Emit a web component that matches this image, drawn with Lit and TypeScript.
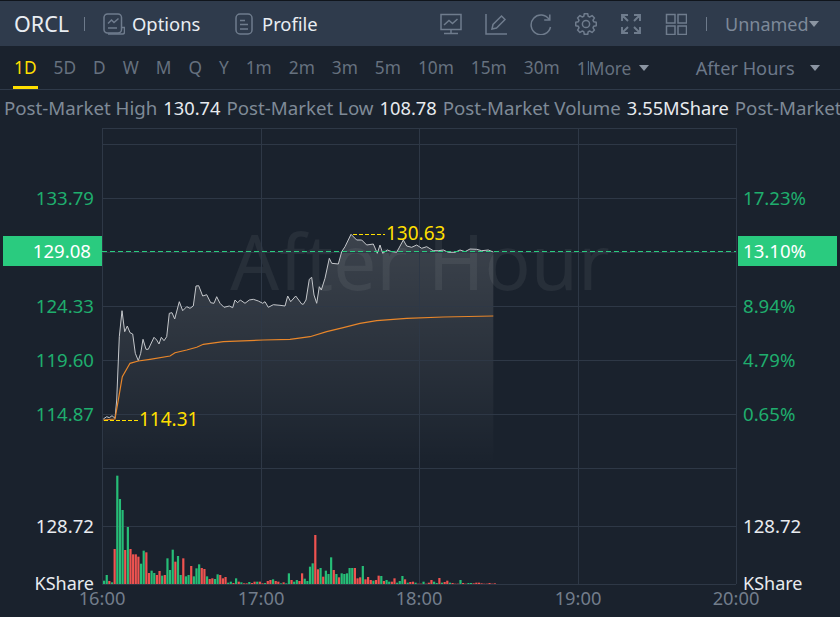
import { LitElement, html, css, svg } from "lit";
import { customElement } from "lit/decorators.js";

const z3 = (a: number[]) => { const o: [number, number][] = []; for (let i = 0; i < a.length; i += 2) o.push([90 + a[i] / 3, 220 + a[i + 1] / 3]); return o; };
const z4 = (a: number[]) => { const o: [number, number][] = []; for (let i = 0; i < a.length; i += 2) o.push([300 + a[i] / 3, 220 + a[i + 1] / 3]); return o; };

const WHITE = [
  ...z3([40,597,50,590,58,593,66,587,75,595,80,540,88,350,96,272,104,335,112,318,120,338,128,342,136,400,145,422,152,400,159,358,168,388,175,388,192,352,200,360,207,372,214,352,222,362,230,350,238,280,246,278,254,297,268,245,278,272,290,260,300,265,310,258,318,198,326,197,338,228,350,224,362,248,372,250,380,230,390,250,402,262,418,258,428,263,435,240,443,248,451,240,465,250,478,240,490,238,505,243,518,250,525,245,535,262,550,254,570,256,585,258,593,228,602,245,617,228,635,252]),
  ...z4([10,253,18,240,28,178,35,172,42,225,50,250,58,200,64,210,75,175,88,115,95,130,115,132,125,95,135,80,153,43,170,60,185,60,200,75,220,72,232,100,240,75,248,100,262,90,275,95,290,97,310,60,320,78,335,82,350,75,365,85,380,80,400,92,415,92,430,90,445,97,465,97,480,90,495,95,510,87,530,88,545,92,565,90,580,96]),
];
const ORANGE = [
  ...z3([40,600,75,597,85,540,97,470,120,430,145,423,180,418,240,408,255,398,290,390,320,382,340,373,400,365,520,360,600,358]),
  ...z4([30,350,80,335,130,323,180,310,230,302,320,295,430,291,580,288]),
];
const pts = (p: [number, number][]) => p.map(([x, y]) => `${x.toFixed(1)},${y.toFixed(1)}`).join(" ");

// 1 = green, 0 = red; heights in 3x zoom pixels
const BARS: [number, number][] = [
  [1,10],[1,27],[0,9],[1,5],[0,105],[1,325],[1,255],[1,222],[0,102],[1,171],[0,105],[0,89],[0,89],[0,82],[1,61],[1,100],[0,95],[0,33],[1,40],[1,33],
  [0,27],[0,39],[1,25],[0,27],[1,77],[1,42],[1,103],[0,67],[1,84],[1,27],[0,77],[1,23],[1,27],[0,54],[1,23],[1,47],[1,59],[0,48],[0,45],[1,23],
  [0,15],[0,17],[1,15],[1,29],[0,27],[0,17],[0,21],[1,4],[1,7],[0,3],[1,17],[0,7],[1,5],[0,2],[0,2],[1,6],[0,3],[0,7],[1,7],[0,7],
  [0,2],[1,3],[0,9],[0,12],[1,14],[0,9],[0,7],[1,2],[0,5],[1,2],
  [1,32],[0,12],[1,7],[1,12],[0,9],[0,32],[1,16],[1,9],[1,52],[1,62],[0,147],[0,44],[1,48],[0,22],[1,40],[1,30],[1,80],[0,42],[1,30],[0,20],
  [1,32],[1,30],[1,32],[1,48],[1,48],[0,48],[0,17],[0,20],[1,54],[0,14],[0,21],[0,12],[1,10],[0,12],[0,25],[1,24],[0,9],[1,12],[1,7],[0,7],
  [0,17],[1,4],[1,9],[1,24],[0,14],[1,4],[0,6],[0,7],[1,4],[0,1],[0,1],[1,7],[0,1],[0,4],[0,12],[1,7],[1,3],[0,18],[1,4],[0,6],
  [0,10],[1,4],[0,3],[0,1],[0,1],[1,12],[0,3],[0,1],[1,3],[1,3],[0,2],[0,4],[0,4],[0,2],[0,1],[0,1],[0,3],[0,1],[0,2],
];

const H_LINES = [144, 198, 252, 306, 360, 414, 468, 526, 584];
const V_LINES = [102, 261, 419, 578, 736];
const LEFT = [["133.79", 197], ["124.33", 305], ["119.60", 359], ["114.87", 413]] as const;
const RIGHT = [["17.23%", 197], ["8.94%", 305], ["4.79%", 359], ["0.65%", 413]] as const;
const TIMES = [["16:00", 102], ["17:00", 261], ["18:00", 419], ["19:00", 578], ["20:00", 736]] as const;

const gearPath = (() => {
  const cx = 11, cy = 11, n = 8, R = 10.4, r = 8;
  let d = "";
  for (let i = 0; i < n; i++) {
    const a = (i / n) * Math.PI * 2 - Math.PI / 2;
    const w = Math.PI / n;
    const p = [[a - w * 0.42, R], [a + w * 0.42, R], [a + w * 0.72, r], [a + w * 1.28, r]];
    p.forEach(([t, q], j) => {
      d += `${i === 0 && j === 0 ? "M" : "L"}${(cx + q * Math.cos(t)).toFixed(2)} ${(cy + q * Math.sin(t)).toFixed(2)}`;
    });
  }
  return d + "Z";
})();

const ICONS = {
  options: svg`<rect x="1" y="1" width="17.5" height="19" rx="3.5"/><path d="M18.5 14.5h3v4.5a2 2 0 0 1-2 2H5"/><path d="M5 10.5l3.5-3.5 2.5 2.5 4.5-4"/><path d="M5 15h9"/>`,
  profile: svg`<rect x="1" y="1" width="16" height="20" rx="4"/><path d="M5 7.5h5M5 11.5h8M5 16h8"/>`,
  monitor: svg`<rect x="1" y="1.5" width="20" height="15"/><path d="M4 12l5-4.5 3.5 3 5-4.5M11 16.5v4M4 20.5h14"/>`,
  edit: svg`<path d="M1 1v20h21"/><path d="M7 16l1-4.5L16.5 3l3.5 3.5-8.5 8.5z"/>`,
  refresh: svg`<path d="M19.2 6.6A9.8 9.8 0 1 0 20.5 14"/><path d="M19.8 1.5v5.6h-5.6"/>`,
  gear: svg`<path d=${gearPath} stroke-linejoin="round"/><circle cx="11" cy="11" r="3.6"/>`,
  expand: svg`<path d="M2 2l6 6M2 8V2h6M20 2l-6 6M14 2h6v6M2 20l6-6M2 14v6h6M20 20l-6-6M20 14v6h-6" stroke-width="1.9"/>`,
  grid: svg`<rect x="1.5" y="1.5" width="8.5" height="8.5"/><rect x="13" y="1.5" width="8.5" height="8.5"/><rect x="1.5" y="13" width="8.5" height="8.5"/><rect x="13" y="13" width="8.5" height="8.5"/>`,
};
const icon = (k: keyof typeof ICONS) => html`<svg class="ico" width="22" height="22" viewBox="0 0 22 22">${ICONS[k]}</svg>`;

const TABS = ["5D", "D", "W", "M", "Q", "Y", "1m", "2m", "3m", "5m", "10m", "15m", "30m"];

@customElement("app-root")
export class AppRoot extends LitElement {
  static styles = css`
    :host { display: block; width: 840px; height: 617px; overflow: hidden; background: #1a222d; font-family: "Noto Sans", "Open Sans", sans-serif; }
    .top { height: 1px; background: #10151c; }
    .header { height: 45px; background: #2f3b4c; display: flex; align-items: center; padding-left: 14px; color: #e9edf2; box-sizing: border-box; }
    .sym { font-size: 21.5px; width: 55px; white-space: nowrap; }
    .sep { width: 1px; height: 14px; background: #6d7a8b; }
    .sep.a { margin: 0 18px 0 15px; }
    .sep.b { margin: 0 18px 0 19px; }
    .item { display: flex; align-items: center; font-size: 18.4px; }
    .item .ico { margin-right: 7px; }
    .item.o { width: 132px; }
    .item.p .ico { margin-right: 5px; }
    .item.p { width: 205px; }
    .ico { fill: none; stroke: #6f7c8d; stroke-width: 1.5; flex: none; }
    .tools { display: flex; gap: 23px; }
    .unnamed { font-size: 18px; color: #7d8999; display: flex; align-items: center; white-space: nowrap; }
    .caret { width: 0; height: 0; border-left: 5px solid transparent; border-right: 5px solid transparent; border-top: 6px solid #8b95a2; flex: none; }
    .tabs { height: 44px; box-sizing: border-box; padding: 1px 0 0 14px; border-bottom: 1px solid #2f3a49; display: flex; align-items: center; font-size: 17.3px; color: #66717f; white-space: nowrap; }
    .tab { margin-right: 17px; flex: none; line-height: 42px; }
    .tab.on { color: #ffdf00; position: relative; }
    .tab.on::after { content: ""; position: absolute; left: -1px; right: -1px; bottom: 0; height: 3px; background: #ffdf00; }
    .clip { width: 12px; overflow: hidden; flex: none; }
    .more { width: 44px; overflow: hidden; flex: none; }
    .tabs .caret { margin-left: 6px; }
    .hours { font-size: 18.2px; margin-left: 47px; color: #6c7889; }
    .tabs .caret.end { margin-left: 15px; }
    .info { height: 38px; display: flex; align-items: center; padding: 0 0 3px 4px; font-size: 18.7px; color: #7f8a97; white-space: nowrap; overflow: hidden; box-sizing: border-box; }
    .info b { font-weight: 400; font-size: 18.3px; color: #e8ebef; margin: 0 6px; }
    svg.chart { display: block; font-family: "Noto Sans", "Open Sans", sans-serif; }
    .grid { stroke: #2e3846; stroke-width: 1; shape-rendering: crispEdges; }
    .num { font-size: 18.6px; fill: #1fae6d; dominant-baseline: central; }
    .num.ks { font-size: 18px; }
    .time { font-size: 18.3px; fill: #727d8b; text-anchor: middle; dominant-baseline: central; }
    .end { text-anchor: end; }
    .wh { fill: #e8ebef; }
    .white { fill: #ffffff; }
    .ylw { fill: #ffdf00; font-size: 19px; dominant-baseline: central; }
    .mark { fill: #2acb7f; }
    .wm { font-size: 76.5px; fill: #ffffff; fill-opacity: 0.06; text-anchor: middle; dominant-baseline: central; }
    .dash { stroke: #2acb7f; stroke-width: 1; stroke-dasharray: 5 3; shape-rendering: crispEdges; }
    .lead { stroke: #ffdf00; stroke-width: 1; stroke-dasharray: 4 2; shape-rendering: crispEdges; }
  `;

  render() {
    const area = `${WHITE[0][0]},465 ${pts(WHITE)} 493.3,${WHITE[WHITE.length - 1][1]} 493.3,465`;
    return html`
      <div class="top"></div>
      <div class="header">
        <span class="sym">ORCL</span><span class="sep a"></span>
        <span class="item o">${icon("options")}Options</span>
        <span class="item p">${icon("profile")}Profile</span>
        <span class="tools">${(["monitor", "edit", "refresh", "gear", "expand", "grid"] as const).map((k) => icon(k))}</span>
        <span class="sep b"></span>
        <span class="unnamed">Unnamed<span class="caret"></span></span>
      </div>
      <div class="tabs">
        <span class="tab on">1D</span>
        ${TABS.map((t) => html`<span class="tab">${t}</span>`)}
        <span class="clip">1h</span>
        <span class="more">More</span><span class="caret"></span>
        <span class="hours">After Hours</span><span class="caret end"></span>
      </div>
      <div class="info">Post-Market High<b>130.74</b>Post-Market Low<b>108.78</b>Post-Market Volume<b>3.55MShare</b>Post-Market</div>
      <svg class="chart" width="840" height="489" viewBox="0 128 840 489">
        <defs>
          <linearGradient id="fade" x1="0" y1="235" x2="0" y2="465" gradientUnits="userSpaceOnUse">
            <stop offset="0" stop-color="#fff" stop-opacity="0.15"/>
            <stop offset="1" stop-color="#fff" stop-opacity="0"/>
          </linearGradient>
        </defs>
        <text class="wm" x="420" y="260">After Hour</text>
        <polygon points=${area} fill="url(#fade)"/>
        ${H_LINES.map((y) => svg`<line class="grid" x1="102" x2="736" y1=${y} y2=${y}/>`)}
        <line class="grid" x1="102" x2="736" y1="128" y2="128"/>
        ${V_LINES.map((x) => svg`<line class="grid" x1=${x} x2=${x} y1="128" y2="584"/>`)}
        ${BARS.map(([g, h], i) => svg`<rect x=${(103 + i * 2.64).toFixed(2)} y=${(584 - h / 3).toFixed(2)} width="2.2" height=${(h / 3).toFixed(2)} fill=${g ? "#26bd77" : "#ef5350"}/>`)}
        <polyline points=${pts(WHITE)} fill="none" stroke="#c4c7cb" stroke-width="1"/>
        <polyline points=${pts(ORANGE)} fill="none" stroke="#e8862a" stroke-width="1.2"/>
        <line class="dash" x1="102" x2="736" y1="251.5" y2="251.5"/>
        <line class="lead" x1="353" x2="385" y1="234.5" y2="234.5"/>
        <text class="ylw" x="386" y="233">130.63</text>
        <line class="lead" x1="104" x2="139" y1="420.5" y2="420.5"/>
        <text class="ylw" x="139" y="419">114.31</text>
        <rect class="mark" x="3" y="236" width="99" height="30"/>
        <rect class="mark" x="738" y="236" width="99" height="30"/>
        ${LEFT.map(([t, y]) => svg`<text class="num end" x="94" y=${y}>${t}</text>`)}
        ${RIGHT.map(([t, y]) => svg`<text class="num" x="743" y=${y}>${t}</text>`)}
        <text class="num end white" x="91" y="250">129.08</text>
        <text class="num white" x="743" y="250">13.10%</text>
        <text class="num end wh" x="94" y="525">128.72</text>
        <text class="num wh" x="743" y="525">128.72</text>
        <text class="num ks end wh" x="94" y="583">KShare</text>
        <text class="num ks wh" x="743" y="583">KShare</text>
        ${TIMES.map(([t, x]) => svg`<text class="time" x=${x} y="597">${t}</text>`)}
      </svg>
    `;
  }
}
